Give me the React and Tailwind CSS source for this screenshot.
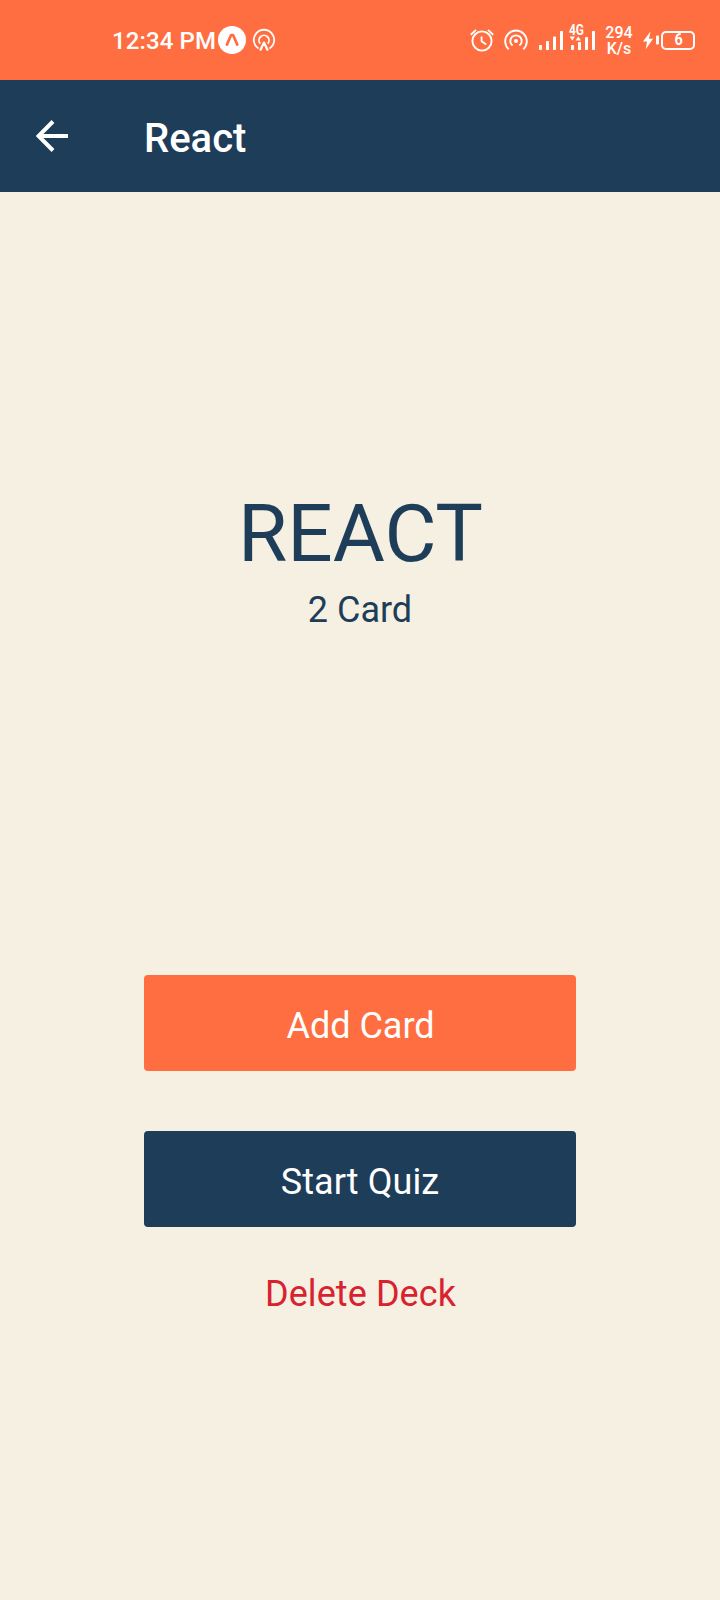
function ExpoIcon() {
  return (
    <svg className="h-7 w-7 shrink-0" viewBox="0 0 28 28" fill="none">
      <circle cx="14" cy="14" r="14" fill="#fff" />
      <path d="M8.9 18.6 L13.1 9 H15.1 L19.3 18.6" stroke="#ff6e40" strokeWidth="2.7" strokeLinejoin="round" strokeLinecap="round" />
    </svg>
  );
}

function CastIcon() {
  return (
    <svg className="ml-1.5 h-6 w-6 shrink-0" viewBox="0 0 24 24" fill="none" stroke="#fff" strokeWidth="1.8">
      <path d="M6.6 20.6 A10.2 10.2 0 1 1 17.4 20.6" />
      <path d="M8.2 15.6 A5 5 0 1 1 15.8 15.6" />
      <path d="M8.2 22.4 L12 14.6 L15.8 22.4" strokeWidth="2.2" strokeLinejoin="round" />
    </svg>
  );
}

function AlarmIcon() {
  return (
    <svg className="h-6 w-6 shrink-0" viewBox="0 0 24 24" fill="none" stroke="#fff" strokeWidth="1.9">
      <circle cx="12" cy="13" r="9.6" />
      <path d="M0.8 6.8 L6 1.9 M23.2 6.8 L18 1.9" />
      <path d="M11.6 8.6 V13.3 L16.2 16.6" />
    </svg>
  );
}

function HotspotIcon() {
  return (
    <svg className="h-6 w-6 shrink-0" viewBox="0 0 24 24" fill="none" stroke="#fff" strokeWidth="1.9">
      <circle cx="12" cy="13" r="2" fill="#fff" stroke="none" />
      <path d="M8.6 17.6 A5.7 5.7 0 1 1 15.4 17.6" />
      <path d="M4.8 21.4 A10.8 10.8 0 1 1 19.2 21.4" />
    </svg>
  );
}

function SignalIcon() {
  return (
    <svg className="h-5 w-6 shrink-0" viewBox="0 0 24 20" fill="#fff">
      <rect x="0" y="15" width="3" height="5" rx="0.7" />
      <rect x="7" y="11" width="3" height="9" rx="0.7" />
      <rect x="14" y="6.5" width="3" height="13.5" rx="0.7" />
      <rect x="21" y="1" width="3" height="19" rx="0.7" />
    </svg>
  );
}

function DataSignal() {
  return (
    <div className="relative mb-2 ml-[7px] h-7 w-[27px] shrink-0">
      <svg className="h-7 w-[27px]" viewBox="0 0 27 28" fill="#fff">
        <rect x="1" y="23" width="3" height="5" rx="0.7" />
        <rect x="8" y="20" width="3" height="8" rx="0.7" />
        <rect x="15" y="15" width="3" height="13" rx="0.7" />
        <rect x="22" y="9" width="3" height="19" rx="0.7" />
        <path d="M-0.5 14.6 H5 L2.25 18.4 Z M5.5 18.4 H11 L8.25 14.6 Z" />
      </svg>
      <span className="absolute top-0 -left-px origin-left scale-x-85 text-sm leading-4 font-bold">4G</span>
    </div>
  );
}

function Battery() {
  return (
    <div className="ml-[10px] flex items-center">
      <svg className="h-5 w-[18px]" viewBox="0 0 18 20" fill="#fff">
        <path d="M7.5 1.5 L0 11.5 H4 L2.8 19.3 L10 8.8 H6 Z" />
        <rect x="13" y="5.5" width="3" height="9" rx="1" />
      </svg>
      <div className="flex h-[19px] w-[34px] items-center justify-center rounded-[5px] border-2 border-white pl-0.5 text-base leading-none font-bold">
        <span className="scale-x-90">6</span>
      </div>
    </div>
  );
}

export default function App() {
  return (
    <div className="flex h-[1600px] w-[720px] flex-col bg-[#f5f0e1] font-['Roboto',sans-serif] text-white">
      <div className="flex h-20 shrink-0 items-center justify-between bg-[#ff6e40] pr-[25px] pl-28">
        <div className="flex items-center">
          <span className="w-[106px] pt-0.5 text-2xl leading-7 font-medium tracking-[0.12px] whitespace-nowrap">12:34 PM</span>
          <ExpoIcon />
          <CastIcon />
        </div>
        <div className="flex items-center">
          <AlarmIcon />
          <div className="w-[10px]" />
          <HotspotIcon />
          <div className="w-[11px]" />
          <SignalIcon />
          <DataSignal />
          <div className="ml-2 w-[28px] pt-0.5 text-center text-base leading-4 font-medium">
            <div>294</div>
            <div>K/s</div>
          </div>
          <Battery />
        </div>
      </div>

      <header className="flex h-28 shrink-0 items-center bg-[#1e3d59]">
        <button className="ml-9 w-[108px]" aria-label="Back">
          <svg className="h-8 w-8" viewBox="0 0 32 32" fill="none" stroke="#fff" strokeWidth="4">
            <path d="M32 16 H3 M17 1.5 L2.5 16 L17 30.5" />
          </svg>
        </button>
        <h1 className="pt-1.5 text-[40px] leading-[48px] font-medium">React</h1>
      </header>

      <main className="flex flex-col items-center text-4xl leading-[42px]">
        <h2 className="mt-[295px] pl-px text-[80px] leading-[94px] text-[#1e3d59]">REACT</h2>
        <p className="mt-2 text-[#1e3d59]">2 Card</p>
        <button className="mt-[344px] h-24 w-[432px] rounded bg-[#ff6e40] pt-1.5 pl-px">Add Card</button>
        <button className="mt-[60px] h-24 w-[432px] rounded bg-[#1e3d59] pt-1.5 tracking-[0.08px]">Start Quiz</button>
        <button className="mt-[46px] pl-px tracking-[0.08px] text-[#d9222f]">Delete Deck</button>
      </main>
    </div>
  );
}
